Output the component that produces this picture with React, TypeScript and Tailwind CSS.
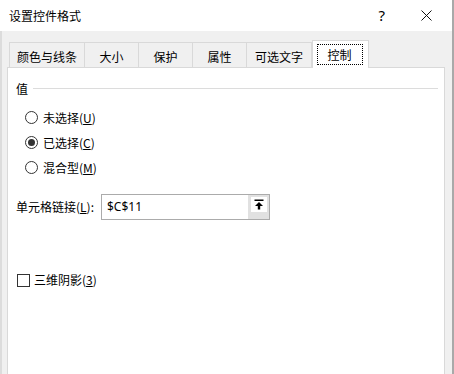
import React from 'react';

const cjk = { fontFamily: '"Noto Sans CJK SC", "Noto Sans", sans-serif' };

const tabs = [
  { label: '颜色与线条', w: 'w-[75px]' },
  { label: '大小', w: 'w-[54px]' },
  { label: '保护', w: 'w-[54px]' },
  { label: '属性', w: 'w-[54px]' },
  { label: '可选文字', w: 'w-[66px]' },
];

function Radio({ checked, label, hotkey }: { checked?: boolean; label: string; hotkey: string }) {
  return (
    <div className="h-[25px] flex items-center pl-[9px]">
      <span className="w-[13px] h-[13px] rounded-full border border-[#333] bg-white flex items-center justify-center shrink-0">
        {checked && <span className="w-[7px] h-[7px] rounded-full bg-[#333]" />}
      </span>
      <span className="ml-[5px] text-[12px] leading-[16px] text-black">
        {label}(<u>{hotkey}</u>)
      </span>
    </div>
  );
}

export default function App() {
  return (
    <div className="w-[454px] h-[374px] overflow-hidden flex flex-col bg-[#f0f0f0] border-r-2 border-[#a9a9a9]" style={cjk}>
      {/* title bar */}
      <div className="h-[31px] bg-white flex items-center pl-[9px] shrink-0">
        <span className="text-[12px] leading-[16px] text-black">设置控件格式</span>
        <span className="ml-auto text-[15px] text-black mr-[36px]" style={{ fontFamily: '"Noto Sans", sans-serif' }}>?</span>
        <svg width="11" height="11" viewBox="0 0 11 11" className="mr-[20px]">
          <path d="M0.5 0.5 L10.5 10.5 M10.5 0.5 L0.5 10.5" stroke="#111" strokeWidth="1" />
        </svg>
      </div>

      <div className="flex-1 flex flex-col pl-[5px] pr-[7px] pt-[9px] border-l-2 border-[#dcdcdc]">
        {/* tabs */}
        <div className="flex items-end h-[27px] pl-[2px] shrink-0">
          {tabs.map((t, i) => (
            <div
              key={t.label}
              className={`${t.w} h-[25px] border-t border-l border-[#d9d9d9] ${i === tabs.length - 1 ? 'border-r' : ''} flex items-center justify-center pt-[3px] text-[12px] text-black`}
            >
              {t.label}
            </div>
          ))}
          <div className="relative z-10 -mb-px w-[57px] h-[28px] bg-white border-t border-l border-r border-[#d9d9d9] flex items-center justify-center">
            <span className="w-[46px] h-[21px] border border-dotted border-black flex items-center justify-center text-[12px] text-black -ml-[2px]">
              控制
            </span>
          </div>
        </div>

        {/* panel */}
        <div className="flex-1 bg-white border border-b-0 border-[#d9d9d9] pl-[8px] pr-[6px] pt-[12px]">
          <div className="h-[17px] flex items-center">
            <span className="text-[12px] leading-[16px] text-black">值</span>
            <span className="flex-1 h-px bg-[#dcdcdc] ml-[5px]" />
          </div>

          <div className="mt-[8px]">
            <Radio label="未选择" hotkey="U" />
            <Radio label="已选择" hotkey="C" checked />
            <Radio label="混合型" hotkey="M" />
          </div>

          <div className="mt-[14px] h-[26px] flex items-center">
            <span className="w-[85px] text-[12px] leading-[16px] text-black">
              单元格链接(<u>L</u>):
            </span>
            <div className="w-[169px] h-[26px] border border-[#ababab] flex">
              <span className="flex-1 pl-[5px] text-[12px] leading-[24px] text-black" style={{ fontFamily: '"Noto Sans", sans-serif' }}>
                $C$11
              </span>
              <div className="w-[21px] h-full bg-[#e1e1e1] flex flex-col items-center pt-[2px]">
                <div className="w-[16px] h-[15px] bg-white flex items-center justify-center">
                  <svg width="10" height="11" viewBox="0 0 10 11">
                    <rect x="0.5" y="0.5" width="9" height="1.5" fill="#000" />
                    <path d="M5 3 L9 7 L6.2 7 L6.2 10.5 L3.8 10.5 L3.8 7 L1 7 Z" fill="#000" />
                  </svg>
                </div>
              </div>
            </div>
          </div>

          <div className="mt-[50px] h-[20px] flex items-center pl-[1px]">
            <span className="w-[13px] h-[13px] border border-[#333] bg-white shrink-0" />
            <span className="ml-[4px] text-[12px] leading-[16px] text-black">
              三维阴影(<u>3</u>)
            </span>
          </div>
        </div>
      </div>
    </div>
  );
}
